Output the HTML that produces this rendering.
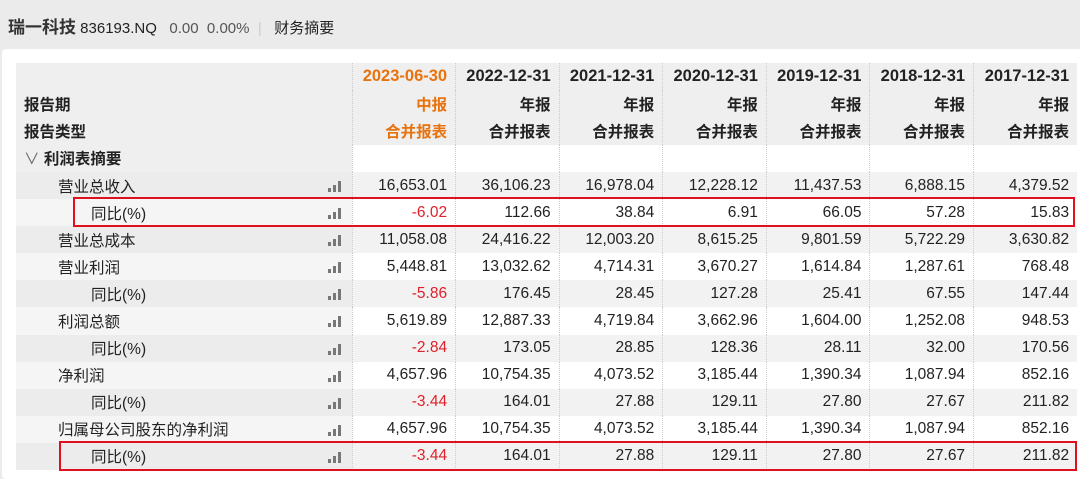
<!DOCTYPE html><html><head><meta charset="utf-8"><style>
*{margin:0;padding:0;box-sizing:border-box}
body{width:1080px;height:471px;background:#ebebeb;font-family:"Liberation Sans","Noto Sans CJK SC",sans-serif;color:#222;position:relative;overflow:hidden}
.top{position:absolute;left:8px;top:13px;font-size:15px;white-space:nowrap}
.top b{font-size:17px;color:#333}
.panel{position:absolute;left:2px;top:49px;width:1090px;height:430px;background:#fff;border-radius:4px}
table{position:absolute;left:16px;top:63px;border-collapse:collapse;font-size:15.5px;table-layout:fixed;width:1061px}
td{height:27.1px;padding:0 8px 0 0;text-align:right;white-space:nowrap;border-left:1px dotted #ccc;width:103.6px;overflow:visible}
td.l{width:336px;text-align:left;border-left:none;position:relative;padding-left:0}
tr.h td{background:#efefef;font-weight:bold;height:27.3px}
tr.h td.o{color:#e8730e}
tr.h:first-child td{font-size:16.5px}
tr.g td{background:#f2f2f2}
tr.w td{background:#fff}
tr.g td.l{background:#ececec}
tr.w td.l{background:#f5f5f5}
.i1{padding-left:42px!important}.i2{padding-left:75px!important}
.bar{position:absolute;left:312px;top:9px;width:14px;height:11px}
.bar i{position:absolute;bottom:0;width:3px;background:#777}
.r{color:#e0202a}
.box{position:absolute;border:2px solid #e0101e}
</style></head><body>
<div class="top"><b>瑞一科技</b> 836193.NQ &nbsp; <span style="color:#555">0.00 &nbsp;0.00%</span> &nbsp;<span style="color:#ccc">|</span>&nbsp;&nbsp; 财务摘要</div>
<div class="panel"></div>
<table>
<tr class="h"><td class="l"></td><td class="o">2023-06-30</td><td>2022-12-31</td><td>2021-12-31</td><td>2020-12-31</td><td>2019-12-31</td><td>2018-12-31</td><td>2017-12-31</td></tr>
<tr class="h"><td class="l" style="padding-left:8px">报告期</td><td class="o">中报</td><td>年报</td><td>年报</td><td>年报</td><td>年报</td><td>年报</td><td>年报</td></tr>
<tr class="h"><td class="l" style="padding-left:8px">报告类型</td><td class="o">合并报表</td><td>合并报表</td><td>合并报表</td><td>合并报表</td><td>合并报表</td><td>合并报表</td><td>合并报表</td></tr>
<tr class="w"><td class="l" style="background:#efefef;padding-left:8px;font-weight:bold"><span style="font-weight:normal;color:#666">∨</span> 利润表摘要</td><td></td><td></td><td></td><td></td><td></td><td></td><td></td></tr>
<tr class="g"><td class="l i1">营业总收入<span class="bar"><i style="left:0;height:4px"></i><i style="left:5px;height:7px"></i><i style="left:10px;height:11px"></i></span></td><td>16,653.01</td><td>36,106.23</td><td>16,978.04</td><td>12,228.12</td><td>11,437.53</td><td>6,888.15</td><td>4,379.52</td></tr>
<tr class="w"><td class="l i2">同比(%)<span class="bar"><i style="left:0;height:4px"></i><i style="left:5px;height:7px"></i><i style="left:10px;height:11px"></i></span></td><td class="r">-6.02</td><td>112.66</td><td>38.84</td><td>6.91</td><td>66.05</td><td>57.28</td><td>15.83</td></tr>
<tr class="g"><td class="l i1">营业总成本<span class="bar"><i style="left:0;height:4px"></i><i style="left:5px;height:7px"></i><i style="left:10px;height:11px"></i></span></td><td>11,058.08</td><td>24,416.22</td><td>12,003.20</td><td>8,615.25</td><td>9,801.59</td><td>5,722.29</td><td>3,630.82</td></tr>
<tr class="w"><td class="l i1">营业利润<span class="bar"><i style="left:0;height:4px"></i><i style="left:5px;height:7px"></i><i style="left:10px;height:11px"></i></span></td><td>5,448.81</td><td>13,032.62</td><td>4,714.31</td><td>3,670.27</td><td>1,614.84</td><td>1,287.61</td><td>768.48</td></tr>
<tr class="g"><td class="l i2">同比(%)<span class="bar"><i style="left:0;height:4px"></i><i style="left:5px;height:7px"></i><i style="left:10px;height:11px"></i></span></td><td class="r">-5.86</td><td>176.45</td><td>28.45</td><td>127.28</td><td>25.41</td><td>67.55</td><td>147.44</td></tr>
<tr class="w"><td class="l i1">利润总额<span class="bar"><i style="left:0;height:4px"></i><i style="left:5px;height:7px"></i><i style="left:10px;height:11px"></i></span></td><td>5,619.89</td><td>12,887.33</td><td>4,719.84</td><td>3,662.96</td><td>1,604.00</td><td>1,252.08</td><td>948.53</td></tr>
<tr class="g"><td class="l i2">同比(%)<span class="bar"><i style="left:0;height:4px"></i><i style="left:5px;height:7px"></i><i style="left:10px;height:11px"></i></span></td><td class="r">-2.84</td><td>173.05</td><td>28.85</td><td>128.36</td><td>28.11</td><td>32.00</td><td>170.56</td></tr>
<tr class="w"><td class="l i1">净利润<span class="bar"><i style="left:0;height:4px"></i><i style="left:5px;height:7px"></i><i style="left:10px;height:11px"></i></span></td><td>4,657.96</td><td>10,754.35</td><td>4,073.52</td><td>3,185.44</td><td>1,390.34</td><td>1,087.94</td><td>852.16</td></tr>
<tr class="g"><td class="l i2">同比(%)<span class="bar"><i style="left:0;height:4px"></i><i style="left:5px;height:7px"></i><i style="left:10px;height:11px"></i></span></td><td class="r">-3.44</td><td>164.01</td><td>27.88</td><td>129.11</td><td>27.80</td><td>27.67</td><td>211.82</td></tr>
<tr class="w"><td class="l i1">归属母公司股东的净利润<span class="bar"><i style="left:0;height:4px"></i><i style="left:5px;height:7px"></i><i style="left:10px;height:11px"></i></span></td><td>4,657.96</td><td>10,754.35</td><td>4,073.52</td><td>3,185.44</td><td>1,390.34</td><td>1,087.94</td><td>852.16</td></tr>
<tr class="g"><td class="l i2">同比(%)<span class="bar"><i style="left:0;height:4px"></i><i style="left:5px;height:7px"></i><i style="left:10px;height:11px"></i></span></td><td class="r">-3.44</td><td>164.01</td><td>27.88</td><td>129.11</td><td>27.80</td><td>27.67</td><td>211.82</td></tr>
</table>
<div class="box" style="left:73px;top:197px;width:1002px;height:30px"></div>
<div class="box" style="left:59px;top:441px;width:1018px;height:30px"></div>
</body></html>
